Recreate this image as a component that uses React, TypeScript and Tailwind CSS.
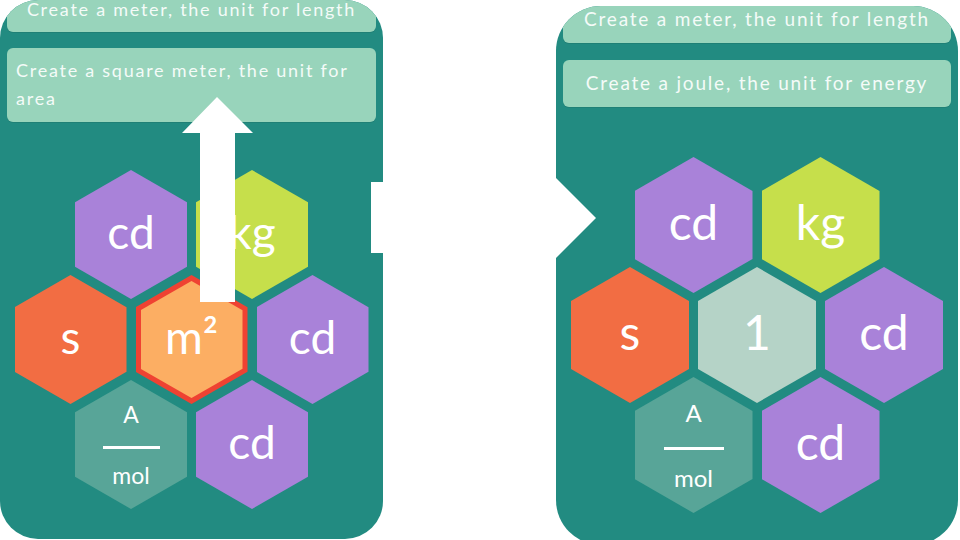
import React from "react";

const clip = "[clip-path:polygon(50%_0%,100%_25%,100%_75%,50%_100%,0%_75%,0%_25%)]";

type Size = "sm" | "lg";

const sizeCls: Record<Size, string> = {
  sm: "w-[112px] h-[129px]",
  lg: "w-[118px] h-[136px]",
};
const labelCls: Record<Size, string> = {
  sm: "text-[46px] pb-[6px]",
  lg: "text-[48px] pb-[6px]",
};

function Hex({
  size,
  color,
  children,
  ring,
  plain,
}: {
  size: Size;
  color: string;
  children: React.ReactNode;
  ring?: boolean;
  plain?: boolean;
}) {
  const label = plain ? "" : labelCls[size];
  if (ring) {
    return (
      <div className={`relative shrink-0 ${sizeCls[size]} ${clip} bg-[#ef4232]`}>
        <div
          className={`absolute inset-x-[5px] inset-y-[6px] ${clip} ${color} flex items-center justify-center text-white leading-none ${label}`}
        >
          {children}
        </div>
      </div>
    );
  }
  return (
    <div
      className={`shrink-0 ${sizeCls[size]} ${clip} ${color} flex items-center justify-center text-white leading-none ${label}`}
    >
      {children}
    </div>
  );
}

function Fraction({ size }: { size: Size }) {
  const sm = size === "sm";
  return (
    <div className="flex flex-col items-center text-white leading-none">
      <span className={sm ? "text-[23px]" : "text-[24px]"}>A</span>
      <div
        className={
          sm
            ? "w-[57px] h-[3px] bg-white mt-[20px] mb-[15px]"
            : "w-[60px] h-[3px] bg-white mt-[22px] mb-[16px]"
        }
      />
      <span className={sm ? "text-[23px]" : "text-[24px]"}>mol</span>
    </div>
  );
}

const PURPLE = "bg-[#a982d9]";
const LIME = "bg-[#c6df4b]";
const ORANGE = "bg-[#f26d43]";
const PEACH = "bg-[#fcae63]";
const SAGE = "bg-[#58a598]";
const MINT = "bg-[#b5d3c7]";

function HexGrid({ size, center }: { size: Size; center: React.ReactNode }) {
  const gap = "gap-[9px]";
  const overlap = size === "sm" ? "-mt-[24px]" : "-mt-[26px]";
  return (
    <div className="flex flex-col items-center">
      <div className={`flex ${gap}`}>
        <Hex size={size} color={PURPLE}>cd</Hex>
        <Hex size={size} color={LIME}>kg</Hex>
      </div>
      <div className={`flex ${gap} ${overlap}`}>
        <Hex size={size} color={ORANGE}>s</Hex>
        {center}
        <Hex size={size} color={PURPLE}>cd</Hex>
      </div>
      <div className={`flex ${gap} ${overlap}`}>
        <Hex size={size} color={SAGE} plain>
          <Fraction size={size} />
        </Hex>
        <Hex size={size} color={PURPLE}>cd</Hex>
      </div>
    </div>
  );
}

const card = "bg-[#98d4bb] rounded-[6px] text-[#f4fbf8] shadow-[0_1px_0_rgba(0,0,0,0.08)]";

export default function App() {
  return (
    <div className="relative w-[960px] h-[540px] overflow-hidden bg-white flex font-[Lato,sans-serif]">
      {/* Left phone */}
      <div className="w-[383px] h-[539px] shrink-0 bg-[#228b81] rounded-[38px] overflow-hidden flex flex-col px-[7px]">
        <div
          className={`${card} -mt-[13px] h-[45px] flex items-center justify-center whitespace-nowrap text-[18px] tracking-[1.75px]`}
        >
          Create a meter, the unit for length
        </div>
        <div
          className={`${card} mt-[16px] h-[74px] pl-[9px] pr-[6px] pt-[8px] text-[18px] leading-[28px] tracking-[1.75px]`}
        >
          Create a square meter, the unit for area
        </div>
        <div className="mt-[48px]">
          <HexGrid
            size="sm"
            center={
              <Hex size="sm" color={PEACH} ring>
                m²
              </Hex>
            }
          />
        </div>
      </div>

      <div className="flex-1" />

      {/* Right phone */}
      <div className="w-[402px] h-[539px] mt-[6px] mr-[2px] shrink-0 bg-[#228b81] rounded-[45px] overflow-hidden flex flex-col px-[7px]">
        <div
          className={`${card} -mt-[11px] h-[48px] flex items-center justify-center whitespace-nowrap text-[19px] tracking-[1.8px]`}
        >
          Create a meter, the unit for length
        </div>
        <div
          className={`${card} mt-[17px] h-[47px] flex items-center justify-center whitespace-nowrap text-[19px] tracking-[1.8px]`}
        >
          Create a joule, the unit for energy
        </div>
        <div className="mt-[50px]">
          <HexGrid size="lg" center={<Hex size="lg" color={MINT}>1</Hex>} />
        </div>
      </div>

      {/* Overlay arrows */}
      <svg
        className="absolute left-0 top-0 pointer-events-none"
        width="960"
        height="540"
        viewBox="0 0 960 540"
      >
        <polygon
          points="217,97 253,133 235,133 235,302 200,302 200,133 182,133"
          fill="#ffffff"
        />
        <polygon
          points="371,182 540,182 540,162 596,218 540,274 540,253 371,253"
          fill="#ffffff"
        />
      </svg>
    </div>
  );
}
